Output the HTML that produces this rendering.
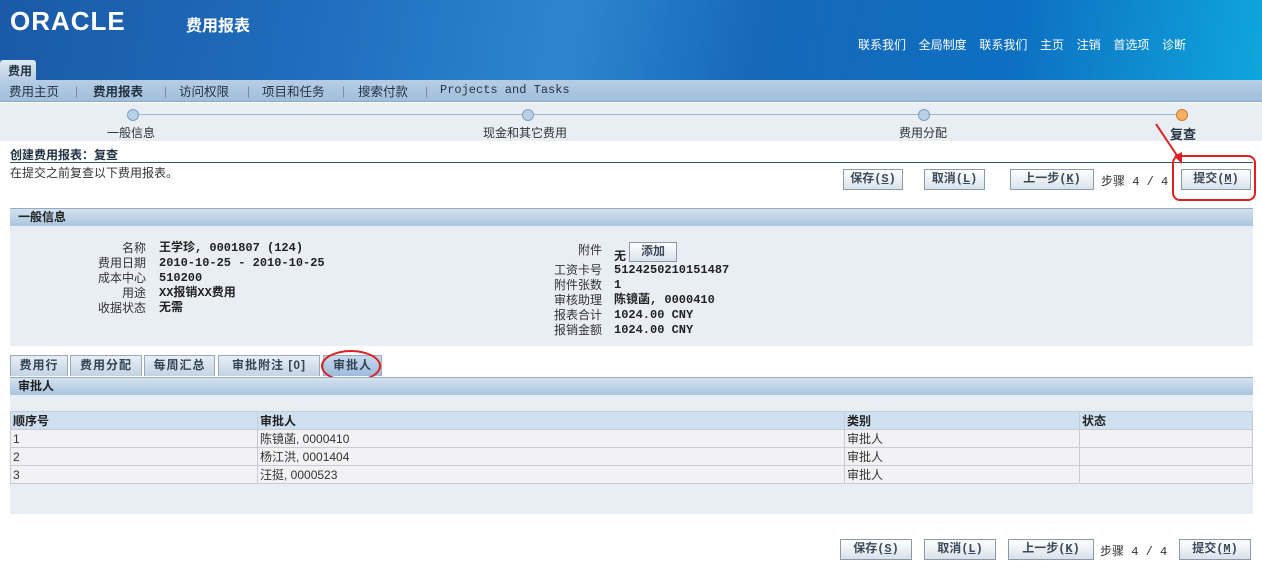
<!DOCTYPE html>
<html><head><meta charset="utf-8"><style>
*{margin:0;padding:0;box-sizing:border-box}
body{width:1262px;height:571px;position:relative;background:#fff;font-family:"Liberation Sans","Noto Sans CJK SC",sans-serif;font-size:12px;color:#333;overflow:hidden}
.a{position:absolute;white-space:nowrap}
.hdr{left:0;top:0;width:1262px;height:80px;background:linear-gradient(100deg,#1a5aa8 0%,#1f6dbd 25%,#2c86cf 45%,#1768b8 60%,#0d6fc2 80%,#0fa6dc 100%)}
.btn{position:absolute;height:21px;border:1px solid #8a9aa8;background:linear-gradient(#fff,#d8e2ea);font-weight:bold;color:#3a4a5a;font-size:12px;text-align:center;line-height:19px;font-family:"Liberation Mono","Noto Sans CJK SC",monospace}
.sec{position:absolute;left:10px;width:1243px;height:18px;background:linear-gradient(#d4e2f0,#a9c5e0);border-top:1px solid #9ab;font-weight:bold;color:#222;padding-left:8px;line-height:17px;font-size:12px}
.lbl{position:absolute;text-align:right;color:#333}
.val{position:absolute;font-weight:bold;color:#222;font-family:"Liberation Mono","Noto Sans CJK SC",monospace}
.tab{position:absolute;top:355px;height:21px;background:linear-gradient(#e8eef5,#c3d3e3);border:1px solid #9ab;border-bottom:none;font-weight:bold;color:#345;line-height:19px;text-align:center;letter-spacing:1px}
td{border:1px solid #c8ccd2;height:18px;padding-left:2px;font-size:12px;color:#333;background:#f2f2f4}
th{border:1px solid #c8ccd2;height:18px;padding-left:2px;text-align:left;font-size:12px;background:#cfe0f0;color:#222}
.dot{position:absolute;top:109px;width:12px;height:12px;border-radius:50%;background:#b8d0e8;border:1px solid #7f9fbf}
.nv{position:absolute;top:81px;color:#234;font-size:12.5px}
.sp{position:absolute;top:84px;color:#789}
</style></head><body>
<div class="a hdr"></div>
<div class="a" style="left:10px;top:6px;color:#fff;font-size:26px;font-weight:bold;letter-spacing:1px;font-family:'Liberation Sans',sans-serif">ORACLE</div>
<div class="a" style="left:186px;top:12px;color:#fff;font-size:16px;font-weight:bold">费用报表</div>
<div class="a" style="left:858px;top:36px;color:#fff;font-size:12px;word-spacing:3px">联系我们&nbsp; 全局制度&nbsp; 联系我们&nbsp; 主页&nbsp; 注销&nbsp; 首选项&nbsp; 诊断</div>
<div class="a" style="left:0;top:60px;width:36px;height:21px;background:linear-gradient(#dfe9f3,#b7cde3);border-radius:3px 3px 0 0;font-weight:bold;color:#234;padding:2px 0 0 8px">费用</div>
<div class="a" style="left:0;top:80px;width:1262px;height:22px;background:linear-gradient(#b7cde5,#a2bedc);border-bottom:1px solid #8aa8c8"></div>
<div class="nv" style="left:9px">费用主页</div><div class="sp" style="left:75px">|</div>
<div class="nv" style="left:93px;font-weight:bold">费用报表</div><div class="sp" style="left:164px">|</div>
<div class="nv" style="left:179px">访问权限</div><div class="sp" style="left:247px">|</div>
<div class="nv" style="left:262px">项目和任务</div><div class="sp" style="left:342px">|</div>
<div class="nv" style="left:358px">搜索付款</div><div class="sp" style="left:425px">|</div>
<div class="nv" style="left:440px;top:83px;font-family:'Liberation Mono',monospace;font-size:12px">Projects and Tasks</div>
<div class="a" style="left:0;top:103px;width:1262px;height:38px;background:#e9eef5"></div>
<div class="a" style="left:133px;top:114px;width:1050px;height:1px;background:#9cb6cf"></div>
<div class="dot" style="left:127px"></div><div class="dot" style="left:522px"></div><div class="dot" style="left:918px"></div>
<div class="dot" style="left:1176px;background:#f7b162;border-color:#c87b2a"></div>
<div class="a" style="left:107px;top:124px">一般信息</div>
<div class="a" style="left:483px;top:124px">现金和其它费用</div>
<div class="a" style="left:899px;top:124px">费用分配</div>
<div class="a" style="left:1170px;top:124px;font-weight:bold;color:#234;font-size:13px">复查</div>
<div class="a" style="left:10px;top:146px;font-weight:bold;color:#234">创建费用报表：复查</div>
<div class="a" style="left:10px;top:162px;width:1243px;height:1px;background:#33557a"></div>
<div class="a" style="left:10px;top:164px">在提交之前复查以下费用报表。</div>
<div class="btn" style="left:843px;top:169px;width:60px">保存(<u>S</u>)</div>
<div class="btn" style="left:924px;top:169px;width:61px">取消(<u>L</u>)</div>
<div class="btn" style="left:1010px;top:169px;width:84px">上一步(<u>K</u>)</div>
<div class="a" style="left:1101px;top:172px;font-family:'Liberation Mono','Noto Sans CJK SC',monospace">步骤 4 / 4</div>
<div class="btn" style="left:1181px;top:169px;width:70px">提交(<u>M</u>)</div>
<div class="a" style="left:1172px;top:155px;width:84px;height:46px;border:2px solid #e02020;border-radius:8px"></div>
<svg class="a" style="left:1150px;top:118px" width="40" height="50"><line x1="6" y1="6" x2="30" y2="42" stroke="#e02020" stroke-width="2"/><path d="M24 38 L32 46 L32 34 Z" fill="#e02020"/></svg>

<div class="sec" style="top:208px">一般信息</div>
<div class="a" style="left:10px;top:226px;width:1243px;height:120px;background:#e9edf4"></div>
<div class="lbl" style="left:60px;width:86px;top:241px;line-height:15px">名称<br>费用日期<br>成本中心<br>用途<br>收据状态</div>
<div class="val" style="left:159px;top:241px;line-height:15px">王学珍, 0001807 (124)<br>2010-10-25 - 2010-10-25<br>510200<br>XX报销XX费用<br>无需</div>
<div class="lbl" style="left:520px;width:82px;top:241px">附件</div>
<div class="val" style="left:614px;top:247px">无</div>
<div class="btn" style="left:629px;top:242px;width:48px;height:20px">添加</div>
<div class="lbl" style="left:520px;width:82px;top:263px;line-height:15px">工资卡号<br>附件张数<br>审核助理<br>报表合计<br>报销金额</div>
<div class="val" style="left:614px;top:263px;line-height:15px">5124250210151487<br>1<br>陈镜菡, 0000410<br>1024.00 CNY<br>1024.00 CNY</div>

<div class="tab" style="left:10px;width:58px">费用行</div>
<div class="tab" style="left:70px;width:72px">费用分配</div>
<div class="tab" style="left:144px;width:71px">每周汇总</div>
<div class="tab" style="left:218px;width:102px">审批附注 [0]</div>
<div class="tab" style="left:323px;width:59px;background:linear-gradient(#c7d9ec,#9dbcdc)">审批人</div>
<div class="a" style="left:321px;top:350px;width:60px;height:32px;border:2px solid #e02020;border-radius:50%"></div>
<div class="sec" style="top:377px">审批人</div>
<div class="a" style="left:10px;top:395px;width:1243px;height:119px;background:#e9edf4"></div>
<table class="a" style="left:10px;top:411px;width:1243px;border-collapse:collapse">
<tr><th style="width:247px">顺序号</th><th style="width:587px">审批人</th><th style="width:235px">类别</th><th>状态</th></tr>
<tr><td>1</td><td>陈镜菡, 0000410</td><td>审批人</td><td></td></tr>
<tr><td>2</td><td>杨江洪, 0001404</td><td>审批人</td><td></td></tr>
<tr><td>3</td><td>汪挺, 0000523</td><td>审批人</td><td></td></tr>
</table>
<div class="btn" style="left:840px;top:539px;width:72px">保存(<u>S</u>)</div>
<div class="btn" style="left:924px;top:539px;width:72px">取消(<u>L</u>)</div>
<div class="btn" style="left:1008px;top:539px;width:86px">上一步(<u>K</u>)</div>
<div class="a" style="left:1100px;top:542px;font-family:'Liberation Mono','Noto Sans CJK SC',monospace">步骤 4 / 4</div>
<div class="btn" style="left:1179px;top:539px;width:72px">提交(<u>M</u>)</div>
</body></html>
